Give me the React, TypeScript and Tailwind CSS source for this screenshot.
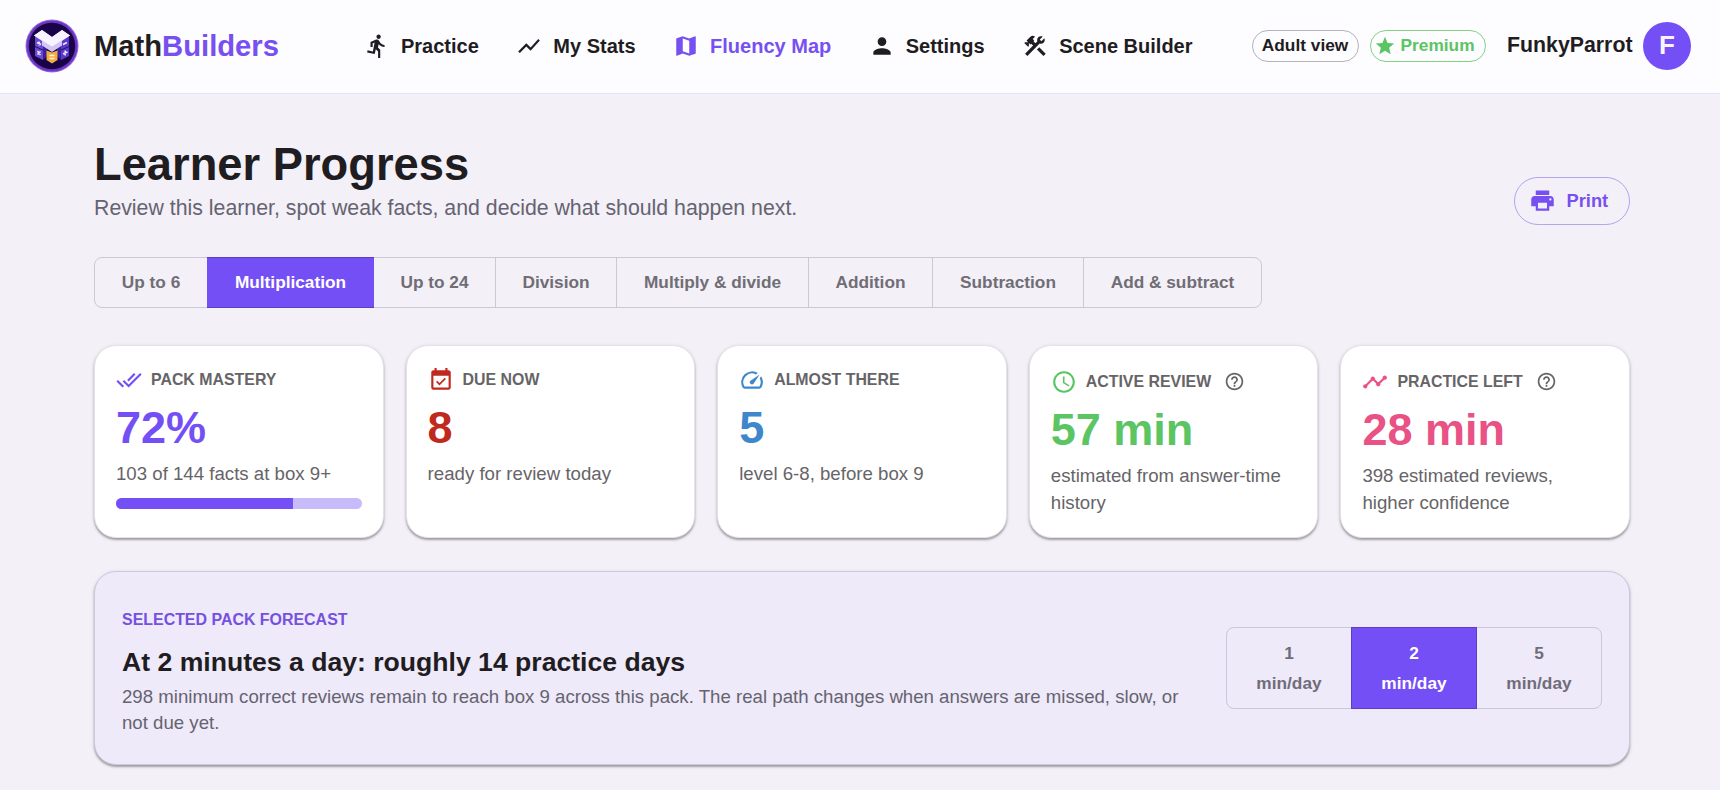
import type { ReactNode } from 'react';
import clsx from 'clsx';
import type { IconType } from 'react-icons';
import {
  MdConstruction,
  MdDirectionsRun,
  MdDoneAll,
  MdEventAvailable,
  MdHelpOutline,
  MdMap,
  MdPerson,
  MdPrint,
  MdSchedule,
  MdShowChart,
  MdSpeed,
  MdStar,
  MdTimeline
} from 'react-icons/md';

const navItems: { label: string; icon: IconType; active?: boolean }[] = [
  { label: 'Practice', icon: MdDirectionsRun },
  { label: 'My Stats', icon: MdShowChart },
  { label: 'Fluency Map', icon: MdMap, active: true },
  { label: 'Settings', icon: MdPerson },
  { label: 'Scene Builder', icon: MdConstruction }
];

const packs = [
  { label: 'Up to 6', width: 'w-[112px]' },
  { label: 'Multiplication', width: 'w-[167px]' },
  { label: 'Up to 24', width: 'w-[121px]' },
  { label: 'Division', width: 'w-[121px]' },
  { label: 'Multiply & divide', width: 'w-[192px]' },
  { label: 'Addition', width: 'w-[124px]' },
  { label: 'Subtraction', width: 'w-[151px]' },
  { label: 'Add & subtract', width: 'w-[178px]' }
];

function Logo() {
  return (
    <svg viewBox="0 0 54 54" className="size-[54px] shrink-0">
      <circle cx="27" cy="27" r="26.5" fill="#9a72e0" />
      <circle cx="27" cy="27" r="25.6" fill="#6d35c4" />
      <circle cx="27" cy="27" r="23.2" fill="#190447" />
      <path d="M10 17 18 21 18 41 10 37Z" fill="#6a48d6" />
      <path d="M18 23 22 26 22 37 18 41Z" fill="#3b1f9c" />
      <path d="M44 17 36 21 36 41 44 37Z" fill="#5b39cc" />
      <path d="M36 23 32 26 32 37 36 41Z" fill="#3b1f9c" />
      <path d="M10 27.500 18 31M44 27.500 36 31" stroke="#24106e" />
      <path d="M9 16.500 17 11 27 18 37 11 45 16.500 37 22 37 26.500 27 33 17 26.500 17 22Z" fill="#d3c6f3" />
      <path d="M9 16.500 17 11 27 18 37 11 45 16.500 27 27.500Z" fill="#f7f3ff" />
      <path d="M21.500 31.500 27 33.500 32.500 31.500 32.500 41 27 44.500 21.500 41Z" fill="#f2ae45" />
      <path d="M24.500 36.500H29.500M24.500 39.500H29.500" stroke="#fff3d6" strokeWidth="1.400" />
      <path
        d="M12 23.500 16 25.500M14 22.500V26.500M12.500 32 15.500 36M15.500 32.500 12.500 35.500M38 25.500 42 23.500M38 34.800 42.500 33M40.200 31.500V36.500"
        stroke="#f1eaff"
        strokeWidth="1.500"
      />
    </svg>
  );
}

function Header() {
  return (
    <header className="flex h-[94px] items-center border-b border-[#e6e1f8] bg-[#fdfcff] pb-[2px] pl-[24.500px] pr-[29px] font-bold">
      <Logo />
      <div className="ml-[15.5px] w-[186px] pt-[2px] text-[29.2px] leading-none">
        Math<span className="text-[#7650f0]">Builders</span>
      </div>
      <nav className="ml-[84px] flex items-center gap-[37.5px] text-[20px]">
        {navItems.map(({ label, icon: Icon, active }) => (
          <a
            key={label}
            className={clsx(
              'flex items-center gap-[11px] whitespace-nowrap pt-px',
              active && 'text-[#7650f0]'
            )}
          >
            <Icon className="size-[26px]" />
            {label}
          </a>
        ))}
      </nav>
      <div className="ml-auto flex items-center">
        <span className="flex h-8 w-[107px] items-center justify-center rounded-full border border-[#b5b3ba] text-[17.3px]">
          Adult view
        </span>
        <span className="ml-[11px] flex h-8 w-[116px] items-center rounded-full border border-[#83d183] pl-[3px] text-[17.3px] text-[#5bc463]">
          <MdStar className="mr-[5px] size-[22px]" />
          Premium
        </span>
        <span className="ml-[21.500px] text-[21.3px]">FunkyParrot</span>
        <span className="ml-[10.500px] flex size-12 items-center justify-center rounded-full bg-[#744ff6] text-[26px] text-[#f7f3ff]">
          F
        </span>
      </div>
    </header>
  );
}

type StatCardProps = {
  icon: IconType;
  label: string;
  value: string;
  color: string;
  help?: boolean;
  children: ReactNode;
};

function StatCard({
  icon: Icon,
  label,
  value,
  color,
  help,
  children
}: StatCardProps) {
  return (
    <div className="h-[193px] rounded-[22px] border border-[#e4e2e8] bg-white px-[21px] pt-[20px] shadow-[0_2px_2px_rgba(0,0,0,0.28),0_1px_4px_rgba(0,0,0,0.12)]">
      <div className={clsx('flex items-center', help ? 'h-[31px]' : 'h-[27px]')}>
        <Icon className={clsx('size-[26px]', color)} />
        <span className="ml-[9px] text-[15.9px] font-bold text-[#666467]">
          {label}
        </span>
        {help && (
          <MdHelpOutline className="mb-px ml-[13px] size-[21px] text-[#666467]" />
        )}
      </div>
      <div
        className={clsx(
          'text-[45px] font-bold leading-[54px]',
          help ? 'mt-[6px]' : 'mt-[8px]',
          color
        )}
      >
        {value}
      </div>
      <div className="mt-[5px] text-[18.65px] leading-[27px] text-[#666467]">
        {children}
      </div>
    </div>
  );
}

function Forecast() {
  return (
    <section className="mt-[33px] flex h-[194px] items-center justify-between rounded-[22px] border border-[#cdc8df] bg-[#eeeaf9] px-[27px] shadow-[0_2px_2px_rgba(0,0,0,0.28),0_1px_4px_rgba(0,0,0,0.12)]">
      <div className="w-[1075px] pt-[8px]">
        <div className="text-[15.95px] font-bold leading-[24px] text-[#7650e0]">
          SELECTED PACK FORECAST
        </div>
        <h2 className="mt-[13px] text-[26.6px] font-bold leading-[34px]">
          At 2 minutes a day: roughly 14 practice days
        </h2>
        <p className="mt-[5px] text-[18.65px] leading-[26px] text-[#666370]">
          298 minimum correct reviews remain to reach box 9 across this pack. The
          real path changes when answers are missed, slow, or not due yet.
        </p>
      </div>
      <div className="flex h-[82px] w-[376px] rounded-lg border border-[#cbc7d8] text-center text-[17.3px] font-bold leading-[30px] text-[#706d79]">
        {[1, 2, 5].map((minutes) => (
          <button
            key={minutes}
            className={clsx(
              'flex flex-1 flex-col items-center justify-center',
              minutes === 2 &&
                '-my-px border border-[#5b3fc0] bg-[#744ff6] text-white'
            )}
          >
            <span>{minutes}</span>
            <span>min/day</span>
          </button>
        ))}
      </div>
    </section>
  );
}

export default function App() {
  return (
    <div className="h-[790px] overflow-hidden bg-[#f3f0f8] font-['Liberation_Sans',Arial,sans-serif] text-[#1f1d21]">
      <Header />
      <main className="ml-[94px] w-[1536px] pt-[44px]">
        <div className="flex items-end justify-between">
          <div>
            <h1 className="text-[45.3px] font-bold leading-[53px]">
              Learner Progress
            </h1>
            <p className="text-[21.3px] leading-[34px] text-[#666370]">
              Review this learner, spot weak facts, and decide what should happen
              next.
            </p>
          </div>
          <button className="flex h-12 w-[116px] items-center rounded-full border border-[#b5a4ee] pb-px pl-[14px] text-[18.3px] font-bold text-[#7650f0]">
            <MdPrint className="mr-[10.5px] size-[27px]" />
            Print
          </button>
        </div>
        <div className="mt-[32px] flex h-[51px] w-max rounded-lg border border-[#cbc9d2] text-[17.25px] font-bold text-[#706d75]">
          {packs.map(({ label, width }, i) => (
            <button
              key={label}
              className={clsx(
                'flex items-center justify-center',
                width,
                i > 2 && 'border-l border-[#cbc9d2]',
                i === 1 && '-my-px border-y border-[#5b3fc0] bg-[#744ff6] text-white'
              )}
            >
              {label}
            </button>
          ))}
        </div>
        <div className="mt-[37px] grid grid-cols-5 gap-[22px]">
          <StatCard icon={MdDoneAll} label="PACK MASTERY" value="72%" color="text-[#744ff6]">
            103 of 144 facts at box 9+
            <div className="mt-[11px] h-[11px] overflow-hidden rounded-full bg-[#c8bbf9]">
              <div className="h-full w-[72%] bg-[#744ff6]" />
            </div>
          </StatCard>
          <StatCard icon={MdEventAvailable} label="DUE NOW" value="8" color="text-[#c0291d]">
            ready for review today
          </StatCard>
          <StatCard icon={MdSpeed} label="ALMOST THERE" value="5" color="text-[#3f87cb]">
            level 6-8, before box 9
          </StatCard>
          <StatCard icon={MdSchedule} label="ACTIVE REVIEW" value="57 min" color="text-[#5bc463]" help>
            estimated from answer-time history
          </StatCard>
          <StatCard icon={MdTimeline} label="PRACTICE LEFT" value="28 min" color="text-[#e85285]" help>
            398 estimated reviews,
            <br />
            higher confidence
          </StatCard>
        </div>
        <Forecast />
      </main>
    </div>
  );
}
